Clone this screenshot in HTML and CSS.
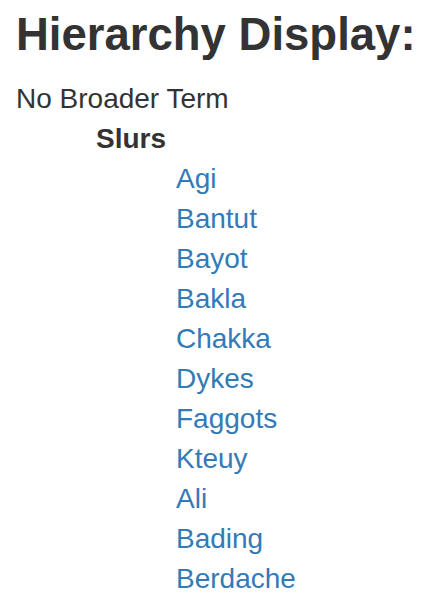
FILE: index.html
```html
<!DOCTYPE html>
<html>
<head>
<meta charset="utf-8">
<link rel="stylesheet" href="styles.css">
</head>
<body>
<div class="page">
  <h1 class="title">Hierarchy Display:</h1>
  <div class="tree">
    <div class="term">No Broader Term</div>
    <div class="level">
      <div class="term strong">Slurs</div>
      <div class="level">
        <a class="term link" href="#">Agi</a>
        <a class="term link" href="#">Bantut</a>
        <a class="term link" href="#">Bayot</a>
        <a class="term link" href="#">Bakla</a>
        <a class="term link" href="#">Chakka</a>
        <a class="term link" href="#">Dykes</a>
        <a class="term link" href="#">Faggots</a>
        <a class="term link" href="#">Kteuy</a>
        <a class="term link" href="#">Ali</a>
        <a class="term link" href="#">Bading</a>
        <a class="term link" href="#">Berdache</a>
      </div>
    </div>
  </div>
</div>
</body>
</html>
```
FILE: styles.css
```css
html, body {
  margin: 0;
  padding: 0;
  background: #fff;
}
.page {
  padding: 10px 0 0 16px;
  font-family: "Liberation Sans", Arial, sans-serif;
  color: #333;
}
.title {
  margin: 0;
  font-size: 45.5px;
  line-height: 50px;
  font-weight: bold;
}
.tree {
  margin-top: 19px;
  display: flex;
  flex-direction: column;
}
.level {
  display: flex;
  flex-direction: column;
  padding-left: 80px;
}
.term {
  display: block;
  font-size: 28px;
  line-height: 40px;
}
.strong {
  font-weight: bold;
}
.link {
  color: #337ab7;
  text-decoration: none;
}
```
